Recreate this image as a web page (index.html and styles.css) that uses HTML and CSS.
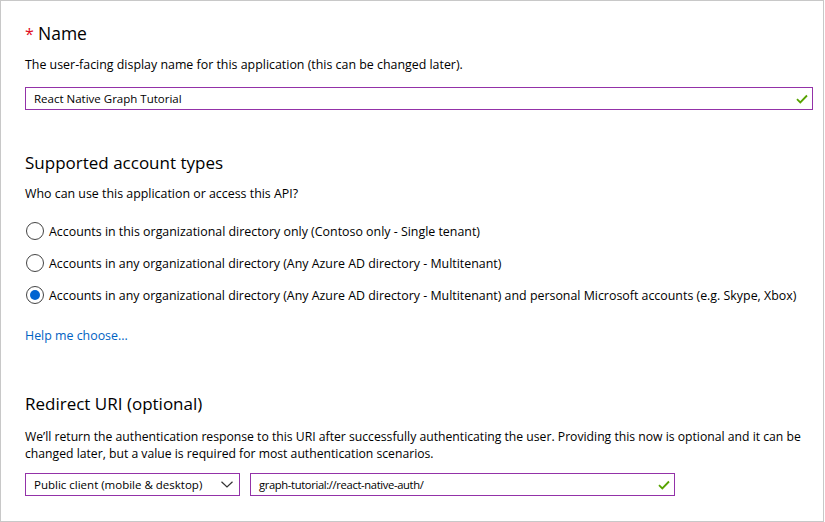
FILE: index.html
```html
<!DOCTYPE html>
<html>
<head>
<meta charset="utf-8">
<link rel="stylesheet" href="styles.css">
</head>
<body>
<div class="frame">
  <h2 class="title"><span class="req">*</span>Name</h2>
  <p class="desc d1">The user-facing display name for this application (this can be changed later).</p>
  <div class="field full">
    <span class="val">React Native Graph Tutorial</span>
    <svg class="check" width="12" height="10" viewBox="0 0 12 10"><path d="M1 5.2 L4.3 8.4 L11 1.5" fill="none" stroke="#57a300" stroke-width="1.8"/></svg>
  </div>

  <h2 class="section s1">Supported account types</h2>
  <p class="desc d2">Who can use this application or access this API?</p>
  <div class="radios">
    <label class="radio"><span class="dot"></span>Accounts in this organizational directory only (Contoso only - Single tenant)</label>
    <label class="radio"><span class="dot"></span>Accounts in any organizational directory (Any Azure AD directory - Multitenant)</label>
    <label class="radio on"><span class="dot"></span>Accounts in any organizational directory (Any Azure AD directory - Multitenant) and personal Microsoft accounts (e.g. Skype, Xbox)</label>
  </div>
  <a class="help">Help me choose...</a>

  <h2 class="section s2">Redirect URI (optional)</h2>
  <p class="desc d3">We’ll return the authentication response to this URI after successfully authenticating the user. Providing this now is optional and it can be changed later, but a value is required for most authentication scenarios.</p>
  <div class="row">
    <div class="field select">
      <span class="val">Public client (mobile &amp; desktop)</span>
      <svg class="chev" width="12" height="7" viewBox="0 0 12 7"><path d="M0.5 0.7 L6 6 L11.5 0.7" fill="none" stroke="#333" stroke-width="1.2"/></svg>
    </div>
    <div class="field uri">
      <span class="val">graph-tutorial://react-native-auth/</span>
      <svg class="check" width="12" height="10" viewBox="0 0 12 10"><path d="M1 5.2 L4.3 8.4 L11 1.5" fill="none" stroke="#57a300" stroke-width="1.8"/></svg>
    </div>
  </div>
</div>
</body>
</html>
```

FILE: styles.css
```css
html, body {
  margin: 0;
  padding: 0;
  background: #fff;
}
body {
  font-family: "Open Sans", "Noto Sans", sans-serif;
  color: #000;
}
.frame {
  width: 788px;
  height: 502px;
  border: 1px solid #c8c8c8;
  padding: 18px 10px 0 24px;
  overflow: hidden;
}
.title {
  margin: 0;
  font-size: 17.5px;
  line-height: 28px;
  font-weight: 400;
}
.req {
  display: inline-block;
  width: 13px;
  color: #e00b1c;
  font-size: 16px;
}
.desc {
  margin: 0;
  font-size: 12.4px;
  line-height: 18px;
}
.d1 { margin-top: 8px; }
.d2 { margin-top: 10px; }
.d3 { margin-top: 12px; line-height: 17px; font-size: 12.2px; }
.field {
  box-sizing: border-box;
  height: 23px;
  border: 1px solid #9332a8;
  display: flex;
  align-items: center;
  justify-content: space-between;
  padding: 0 4px 0 8px;
  font-size: 11.5px;
}
.full { margin-top: 13px; }
.section {
  margin: 0;
  font-size: 17px;
  line-height: 24px;
  font-weight: 400;
}
.s1 { margin-top: 41px; }
.s2 { margin-top: 47px; }
.radios {
  margin-top: 18px;
  display: flex;
  flex-direction: column;
  gap: 12px;
}
.radio {
  display: flex;
  align-items: center;
  height: 20px;
  font-size: 12.4px;
}
.dot {
  box-sizing: border-box;
  width: 18px;
  height: 18px;
  border: 1px solid #444;
  border-radius: 50%;
  margin: 0 5px 0 1px;
  display: flex;
  align-items: center;
  justify-content: center;
}
.on .dot::after {
  content: "";
  width: 10px;
  height: 10px;
  border-radius: 50%;
  background: #0063d1;
}
.help {
  display: block;
  margin-top: 22px;
  font-size: 12.4px;
  line-height: 18px;
  color: #0062c3;
}
.row {
  margin-top: 11px;
  display: flex;
  gap: 10px;
}
.select { width: 215px; padding-right: 6px; }
.uri { width: 425px; font-size: 11.2px; letter-spacing: -0.35px; }
```
